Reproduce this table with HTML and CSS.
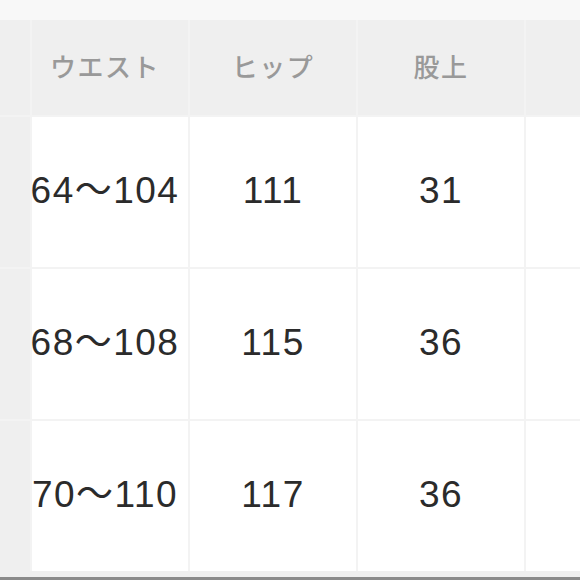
FILE: index.html
```html
<!DOCTYPE html>
<html lang="ja">
<head>
<meta charset="utf-8">
<link rel="stylesheet" href="styles.css">
</head>
<body>
<div class="page">
  <div class="top"></div>
  <div class="table">
    <div class="hcell side"></div>
    <div class="hcell first">ウエスト</div>
    <div class="hcell">ヒップ</div>
    <div class="hcell">股上</div>
    <div class="hcell"></div>

    <div class="side"></div>
    <div class="cell first">64〜104</div>
    <div class="cell">111</div>
    <div class="cell">31</div>
    <div class="cell"></div>

    <div class="side"></div>
    <div class="cell first">68〜108</div>
    <div class="cell">115</div>
    <div class="cell">36</div>
    <div class="cell"></div>

    <div class="side"></div>
    <div class="cell first">70〜110</div>
    <div class="cell">117</div>
    <div class="cell">36</div>
    <div class="cell"></div>
  </div>
  <div class="bottom"></div>
</div>
</body>
</html>
```
FILE: styles.css
```css
html, body {
  margin: 0;
  padding: 0;
  background: #f8f8f8;
}
.page {
  width: 580px;
  height: 580px;
  overflow: hidden;
  display: flex;
  flex-direction: column;
}
.top {
  height: 20px;
  background: #f8f8f8;
}
.table {
  display: grid;
  grid-template-columns: 30px 156px 166px 166px 1fr;
  grid-template-rows: 95px 150px 150px 150px;
  column-gap: 2px;
  row-gap: 2px;
  background: #f3f3f3;
}
.hcell {
  background: #efefef;
  color: #999999;
  font-family: "Noto Sans CJK JP", sans-serif;
  font-size: 26px;
  font-weight: 500;
  display: flex;
  align-items: center;
  justify-content: center;
  letter-spacing: 1.5px;
  padding-bottom: 4px;
}
.side {
  background: #efefef;
}
.cell {
  background: #ffffff;
  color: #2b2b2b;
  font-family: "Liberation Sans", "Noto Sans CJK JP", sans-serif;
  font-size: 37px;
  line-height: 1;
  font-weight: 400;
  letter-spacing: 1.5px;
  display: flex;
  align-items: center;
  justify-content: center;
  white-space: nowrap;
  padding-bottom: 4px;
}
.first {
  padding-right: 10px;
}
.bottom {
  height: 6px;
  background: #efefef;
  border-bottom: 3px solid #8a8a8a;
}
```
